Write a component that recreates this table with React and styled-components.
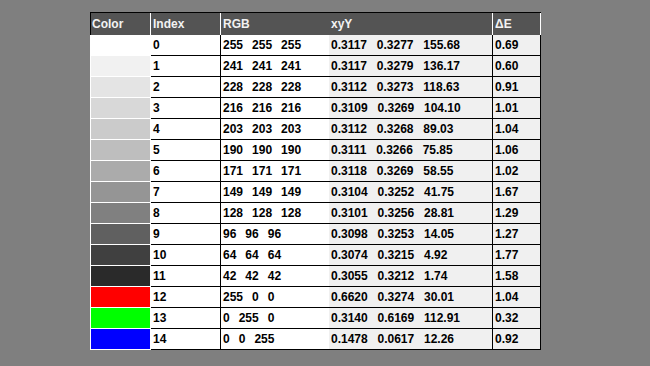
import styled, { createGlobalStyle } from "styled-components";

const GlobalStyle = createGlobalStyle`
  html, body {
    margin: 0;
    padding: 0;
    background: #7f7f7f;
  }
  body {
    font-family: "Liberation Sans", Arial, sans-serif;
  }
`;

const Page = styled.div`
  width: 650px;
  height: 366px;
  padding: 12px 0 0 90px;
  box-sizing: border-box;
  background: #7f7f7f;
`;

const Table = styled.div`
  width: 451px;
  border-top: 1px solid #000;
  font-size: 12px;
  font-weight: bold;
  line-height: 14px;
`;

const COLS = "61px 70px 108px 164px 48px";

const HeadRow = styled.div`
  display: grid;
  grid-template-columns: ${COLS};
  height: 22px;
  background: #545454;
  border-right: 1px solid #fff;
  box-sizing: border-box;
`;

const HeadCell = styled.div`
  display: flex;
  align-items: center;
  padding-left: ${(p) => (p.$first ? 1 : 2)}px;
  color: #f2f2f2;
  box-sizing: border-box;
  border-left: ${(p) => (p.$first ? "1px solid #000" : "none")};
  border-right: ${(p) => (p.$sep ? "1px solid #fff" : "none")};
`;

const Row = styled.div`
  display: grid;
  grid-template-columns: ${COLS};
  height: 21px;
`;

const Swatch = styled.div`
  background: ${(p) => p.$color};
  border-left: 1px solid #fff;
  border-right: 1px solid #fff;
  border-bottom: 1px solid #fff;
  box-sizing: border-box;
`;

const Cell = styled.div`
  display: flex;
  align-items: center;
  gap: ${(p) => p.$gap || 0}px;
  padding-left: 2px;
  color: #000;
  background: ${(p) => (p.$shaded ? "#f0f0f0" : "#fff")};
  border-bottom: 1px solid #000;
  border-right: ${(p) => (p.$edge ? "1px solid #000" : "none")};
  box-sizing: border-box;
`;

const rows = [
  ["#ffffff", "255 255 255", "0.3117 0.3277 155.68", "0.69"],
  ["#f1f1f1", "241 241 241", "0.3117 0.3279 136.17", "0.60"],
  ["#e4e4e4", "228 228 228", "0.3112 0.3273 118.63", "0.91"],
  ["#d8d8d8", "216 216 216", "0.3109 0.3269 104.10", "1.01"],
  ["#cbcbcb", "203 203 203", "0.3112 0.3268 89.03", "1.04"],
  ["#bebebe", "190 190 190", "0.3111 0.3266 75.85", "1.06"],
  ["#ababab", "171 171 171", "0.3118 0.3269 58.55", "1.02"],
  ["#959595", "149 149 149", "0.3104 0.3252 41.75", "1.67"],
  ["#808080", "128 128 128", "0.3101 0.3256 28.81", "1.29"],
  ["#606060", "96 96 96", "0.3098 0.3253 14.05", "1.27"],
  ["#404040", "64 64 64", "0.3074 0.3215 4.92", "1.77"],
  ["#2a2a2a", "42 42 42", "0.3055 0.3212 1.74", "1.58"],
  ["#ff0000", "255 0 0", "0.6620 0.3274 30.01", "1.04"],
  ["#00ff00", "0 255 0", "0.3140 0.6169 112.91", "0.32"],
  ["#0000ff", "0 0 255", "0.1478 0.0617 12.26", "0.92"],
];

export default function App() {
  return (
    <>
      <GlobalStyle />
      <Page>
        <Table>
          <HeadRow>
            <HeadCell $first $sep>Color</HeadCell>
            <HeadCell $sep>Index</HeadCell>
            <HeadCell>RGB</HeadCell>
            <HeadCell $sep>xyY</HeadCell>
            <HeadCell>ΔE</HeadCell>
          </HeadRow>
          {rows.map(([color, rgb, xyy, de], i) => (
            <Row key={i}>
              <Swatch $color={color} />
              <Cell $edge>{i}</Cell>
              <Cell $gap={9}>
                {rgb.split(" ").map((v, j) => (
                  <span key={j}>{v}</span>
                ))}
              </Cell>
              <Cell $shaded $edge $gap={9.8}>
                {xyy.split(" ").map((v, j) => (
                  <span key={j}>{v}</span>
                ))}
              </Cell>
              <Cell $shaded $edge>{de}</Cell>
            </Row>
          ))}
        </Table>
      </Page>
    </>
  );
}
